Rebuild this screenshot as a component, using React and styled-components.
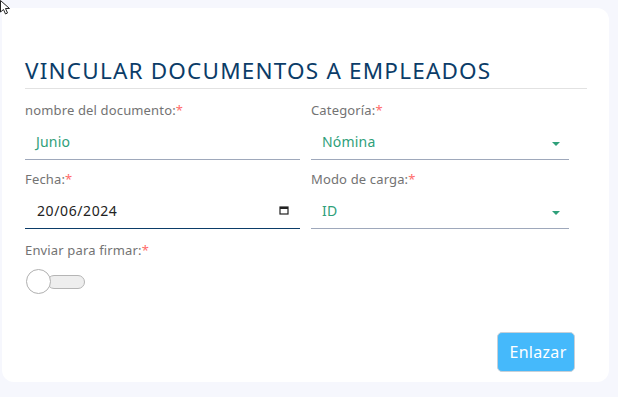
import React from "react";
import styled, { createGlobalStyle } from "styled-components";

const GlobalStyle = createGlobalStyle`
  html, body {
    margin: 0;
    padding: 0;
    background: #f6f7fd;
    font-family: "Noto Sans", "Open Sans", sans-serif;
  }
`;

const Page = styled.div`
  position: relative;
  width: 618px;
  height: 397px;
  padding: 8px 0 0 2px;
  box-sizing: border-box;
`;

const Card = styled.div`
  width: 607px;
  height: 374px;
  background: #fff;
  border-radius: 0 12px 12px 12px;
  padding: 0 22px 0 23px;
  box-sizing: border-box;
  display: flex;
  flex-direction: column;
`;

const Title = styled.h2`
  margin: 0;
  padding: 48px 0 2px;
  font-size: 22.5px;
  line-height: 30px;
  font-weight: 400;
  color: #0b3c68;
  border-bottom: 1px solid #e2e2e2;
  letter-spacing: 1.2px;
`;

const Grid = styled.div`
  display: grid;
  grid-template-columns: 275px 258px;
  column-gap: 11px;
  row-gap: 10px;
  margin-top: 12px;
`;

const Field = styled.div`
  display: flex;
  flex-direction: column;
`;

const Label = styled.label`
  font-size: 13px;
  line-height: 18px;
  color: #737373;
  letter-spacing: 0.15px;
`;

const Req = styled.span`
  color: #ff6b6b;
`;

const Control = styled.div`
  height: 41px;
  display: flex;
  align-items: center;
  padding: 4px 11px 0 ${(p) => (p.$dark ? "12px" : "11px")};
  box-sizing: border-box;
  border-bottom: ${(p) => (p.$focus ? "1.5px solid #0b3c68" : "1px solid #9ea8bb")};
  font-size: 14px;
  color: ${(p) => (p.$dark ? "#222" : "#2ea07a")};
  justify-content: space-between;
`;

const Value = styled.span`
  letter-spacing: ${(p) => (p.$spaced ? "0.6px" : "0.2px")};
`;

const Caret = styled.span`
  width: 0;
  height: 0;
  border-left: 4px solid transparent;
  border-right: 4px solid transparent;
  border-top: 4px solid #2ea07a;
  margin-right: -2px;
  margin-top: 6px;
`;

const ToggleWrap = styled.div`
  display: flex;
  flex-direction: column;
  margin-top: 12px;
`;

const Toggle = styled.div`
  position: relative;
  width: 60px;
  height: 26px;
  margin: 10px 0 0 1px;
`;

const Track = styled.span`
  position: absolute;
  left: 21px;
  top: 6px;
  width: 36px;
  height: 12px;
  border: 1px solid #b5b5b5;
  border-radius: 7px;
  background: #eeeeee;
`;

const Knob = styled.span`
  position: absolute;
  left: 0;
  top: 0;
  width: 23px;
  height: 23px;
  border: 1px solid #b0b0b0;
  border-radius: 50%;
  background: #fff;
`;

const Footer = styled.div`
  margin-top: auto;
  display: flex;
  justify-content: flex-end;
  padding: 0 12px 10px 0;
`;

const Button = styled.button`
  width: 78px;
  height: 40px;
  border: 1px solid #c7d0d8;
  border-radius: 5px;
  background: #45b9fb;
  color: #fff;
  font-family: "Noto Sans", sans-serif;
  font-size: 16px;
  letter-spacing: 0.3px;
  padding: 0 0 0 4px;
`;

const Cursor = styled.svg`
  position: absolute;
  left: 0;
  top: 0;
`;

export default function App() {
  return (
    <>
      <GlobalStyle />
      <Page>
        <Cursor width="12" height="18" viewBox="0 0 12 18">
          <path d="M0.5 0.5 L0.5 12 L3.5 9.5 L5.5 14 L7.5 13 L5.5 8.5 L9.5 8.5 Z" fill="#fff" stroke="#222" strokeWidth="1" />
        </Cursor>
        <Card>
          <Title>VINCULAR DOCUMENTOS A EMPLEADOS</Title>
          <Grid>
            <Field>
              <Label>nombre del documento:<Req>*</Req></Label>
              <Control><Value>Junio</Value></Control>
            </Field>
            <Field>
              <Label>Categoría:<Req>*</Req></Label>
              <Control><Value>Nómina</Value><Caret /></Control>
            </Field>
            <Field>
              <Label>Fecha:<Req>*</Req></Label>
              <Control $focus $dark>
                <Value $spaced>20/06/2024</Value>
                <svg width="10" height="10" viewBox="0 0 10 10">
                  <rect x="1" y="2" width="8" height="7" fill="none" stroke="#222" strokeWidth="1.2" />
                  <rect x="1" y="2" width="8" height="2" fill="#222" />
                </svg>
              </Control>
            </Field>
            <Field>
              <Label>Modo de carga:<Req>*</Req></Label>
              <Control><Value>ID</Value><Caret /></Control>
            </Field>
          </Grid>
          <ToggleWrap>
            <Label>Enviar para firmar:<Req>*</Req></Label>
            <Toggle>
              <Track />
              <Knob />
            </Toggle>
          </ToggleWrap>
          <Footer>
            <Button>Enlazar</Button>
          </Footer>
        </Card>
      </Page>
    </>
  );
}
